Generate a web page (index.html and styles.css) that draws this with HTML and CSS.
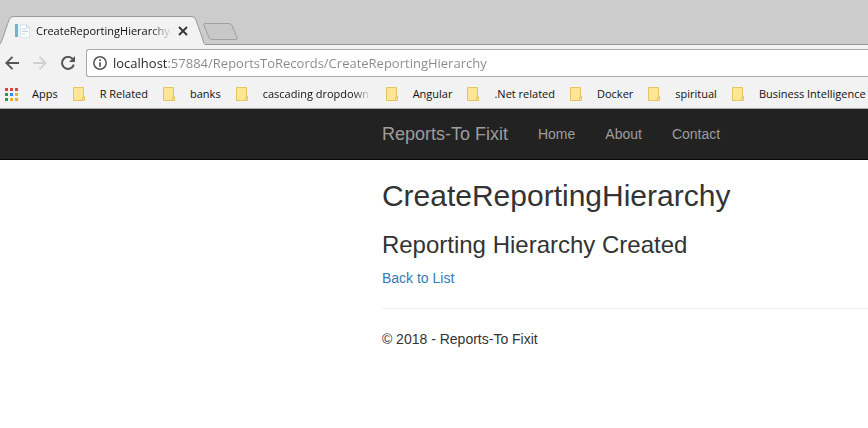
FILE: index.html
```html
<!DOCTYPE html>
<html lang="en">
<head>
<meta charset="utf-8">
<title>CreateReportingHierarchy</title>
<link rel="stylesheet" href="styles.css">
</head>
<body>
<svg class="defs" aria-hidden="true">
  <symbol id="folder" viewBox="0 0 13 14">
    <path d="M.5.5h10v9h1v4H.5z" fill="#ffe694" stroke="#e3c565"/>
    <path d="M9.500 13.500v-3h2" fill="none" stroke="#e3c565"/>
  </symbol>
</svg>
<header class="browser">
  <div class="tabstrip">
    <div class="tab">
      <svg class="edge" viewBox="0 0 13 29"><path d="M0 29V28Q1 27 2 24L9 4Q10.500 .5 13 .5V29z" fill="#f2f2f2"/><path d="M0 28Q1 27 2 24L9 4Q10.500 .5 13 .5" fill="none" stroke="#999"/></svg>
      <div class="tab-body">
        <svg class="favicon" viewBox="0 0 16 16"><path d="M0 1h3v13H0z" fill="#6db3d3"/><path d="M5.500 1.500h6l3 3v10h-9z" fill="#fafcfe" stroke="#dbe4ee"/><path d="M11.500 1.500v3h3M7 6h5M7 8.500h6M7 11h3" fill="none" stroke="#c5d3e1"/></svg>
        <span class="tab-title">CreateReportingHierarchy</span>
        <button class="close" type="button" aria-label="Close tab"><svg viewBox="0 0 10 10"><path d="M1 1l8 8M9 1L1 9" stroke="#333" stroke-width="1.800"/></svg></button>
      </div>
      <svg class="edge" viewBox="0 0 13 29"><path d="M0 .5Q2.500 .5 4 4L11 24Q12 27 13 28.500V29H0z" fill="#f2f2f2"/><path d="M0 .5Q2.500 .5 4 4L11 24Q12 28.500 13 28.500" fill="none" stroke="#999"/></svg>
    </div>
    <button class="new-tab" type="button" aria-label="New tab"><svg viewBox="0 0 36 17"><path d="M2 .5h24q2 0 3 2l5 12q.8 2-1 2H9q-2 0-3-2L1 2.500Q.3 .5 2 .5z" fill="#c8c8c8" stroke="#a0a0a0"/></svg></button>
  </div>
  <form class="toolbar">
    <button class="tool" type="button" aria-label="Back"><svg viewBox="0 0 14 14"><path d="M14 7H1.500M7.500 .8L1.300 7l6.200 6.200" fill="none" stroke="#555" stroke-width="1.900"/></svg></button>
    <button class="tool" type="button" aria-label="Forward"><svg viewBox="0 0 14 14"><path d="M0 7h12.500M6.500 .8L12.700 7l-6.200 6.200" fill="none" stroke="#d0d0d0" stroke-width="1.900"/></svg></button>
    <button class="tool" type="button" aria-label="Reload"><svg viewBox="0 0 14 14"><path d="M11.800 3.200A6 6 0 1 0 12.800 8.600" fill="none" stroke="#555" stroke-width="2"/><path d="M14 0v6H8z" fill="#555"/></svg></button>
    <div class="omnibox">
      <svg class="info" viewBox="0 0 14 14"><circle cx="7" cy="7" r="6.200" fill="none" stroke="#555" stroke-width="1.500"/><path d="M6.200 6.200h1.700v4.500H6.200zM6.200 3.300h1.700v1.700H6.200z" fill="#555"/></svg>
      <input class="url" type="text" aria-label="Address" value="localhost:57884/ReportsToRecords/CreateReportingHierarchy">
    </div>
  </form>
  <nav class="bookmarks" aria-label="Bookmarks">
    <a class="apps" href="#"><svg viewBox="0 0 13 13"><path d="M0 0h3v3H0zM5 0h3v3H5zM10 0h3v3h-3z" fill="#dc4437"/><path d="M0 5h3v3H0z" fill="#259b45"/><path d="M5 5h3v3H5z" fill="#3c83f0"/><path d="M10 5h3v3h-3zM5 10h3v3H5zM10 10h3v3h-3z" fill="#e6b422"/><path d="M0 10h3v3H0z" fill="#259b45"/></svg>Apps</a>
    <a href="#"><svg><use href="#folder"/></svg>R Related</a>
    <a href="#"><svg><use href="#folder"/></svg>banks</a>
    <a href="#"><svg><use href="#folder"/></svg><span class="faded">cascading dropdown</span></a>
    <a href="#"><svg><use href="#folder"/></svg>Angular</a>
    <a href="#"><svg><use href="#folder"/></svg>.Net related</a>
    <a href="#"><svg><use href="#folder"/></svg>Docker</a>
    <a href="#"><svg><use href="#folder"/></svg>spiritual</a>
    <a href="#"><svg><use href="#folder"/></svg>Business Intelligence</a>
  </nav>
</header>
<nav class="navbar">
  <a class="brand" href="#">Reports-To Fixit</a>
  <a href="#">Home</a>
  <a href="#">About</a>
  <a href="#">Contact</a>
</nav>
<main class="content">
  <h2>CreateReportingHierarchy</h2>
  <h3>Reporting Hierarchy Created</h3>
  <p><a href="#">Back to List</a></p>
  <hr>
  <footer><p>© 2018 - Reports-To Fixit</p></footer>
</main>
</body>
</html>
```
FILE: styles.css
```css
* { box-sizing: border-box; }
body {
  margin: 0;
  background: #fff;
  color: #333;
  font: 14px/20px "Liberation Sans", Arial, sans-serif;
  overflow-x: hidden;
}
a { color: #337ab7; text-decoration: none; }
button { padding: 0; border: 0; background: none; }
svg { display: block; flex: none; }
.defs { position: absolute; width: 0; height: 0; }

.browser {
  background: #f2f2f2;
  border-bottom: 1px solid #aaa;
  font: 11px/16px "Open Sans", "Segoe UI", sans-serif;
  color: #111;
}
.tabstrip {
  display: flex;
  align-items: flex-end;
  height: 45px;
  background: linear-gradient(#999, #999) bottom / 100% 1px no-repeat #ccc;
}
.tab { display: flex; height: 29px; }
.edge { width: 13px; height: 29px; }
.tab-body {
  display: flex;
  align-items: center;
  width: 179px;
  padding-left: 2px;
  background: #f2f2f2;
  border-top: 1px solid #999;
}
.favicon { width: 16px; height: 16px; margin-right: 5px; }
.tab-title {
  width: 136px;
  overflow: hidden;
  white-space: nowrap;
  mask-image: linear-gradient(to right, #000 115px, transparent 136px);
}
.close { margin-left: 6px; }
.close svg { width: 10px; height: 10px; }
.new-tab { margin: 0 0 5px -2px; }
.new-tab svg { width: 36px; height: 17px; }

.toolbar {
  display: flex;
  align-items: center;
  gap: 14px;
  padding: 4px 0 0 5px;
}
.tool svg { width: 14px; height: 14px; }
.omnibox {
  display: flex;
  align-items: center;
  gap: 6px;
  flex: 1;
  height: 28px;
  margin-left: -3px;
  padding-left: 6px;
  background: #fff;
  border: 1px solid #a9a9a9;
  border-right: 0;
  border-radius: 3px 0 0 3px;
}
.info { width: 14px; height: 14px; }
.url {
  flex: 1;
  min-width: 0;
  padding: 0;
  border: 0;
  outline: 0;
  font: 13px/20px "Open Sans", "Segoe UI", sans-serif;
  color: transparent;
  background: linear-gradient(to right, #222 54px, #888 54px);
  background-clip: text;
}
.bookmarks {
  display: flex;
  gap: 15px;
  align-items: center;
  height: 31px;
  padding: 3px 0 0 5px;
  overflow: hidden;
  white-space: nowrap;
}
.bookmarks a { display: flex; align-items: center; gap: 14px; color: #111; }
.bookmarks svg { width: 13px; height: 14px; }
.bookmarks .apps svg { height: 13px; }
.faded { width: 108px; overflow: hidden; mask-image: linear-gradient(to right, #000 90px, transparent 108px); }

.navbar {
  display: flex;
  align-items: center;
  gap: 30px;
  height: 51px;
  padding-left: 44%;
  background: #222;
  border-bottom: 1px solid #080808;
}
.navbar a { color: #9d9d9d; }
.navbar .brand { font-size: 18px; }

.content { padding: 19px 0 0 44%; }
h2, h3 { font-weight: 400; }
h2 { margin: 0 0 20px; font-size: 30px; line-height: 33px; }
h3 { margin: 0 0 10px; font-size: 24px; line-height: 26px; }
p { margin: 0 0 10px; }
hr { margin: 20px 0; border: 0; border-top: 1px solid #eee; }
```
